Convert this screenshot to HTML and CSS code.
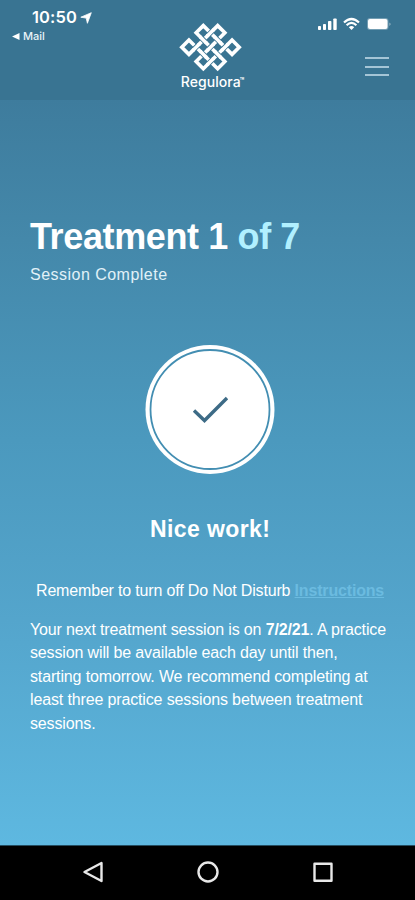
FILE: index.html
```html
<!DOCTYPE html>
<html lang="en">
<head>
<meta charset="utf-8">
<title>Regulora</title>
<link rel="stylesheet" href="styles.css">
</head>
<body>
<div class="screen">
  <header class="top">
    <div class="top-left">
      <div class="clock"><span class="time">10:50</span>
        <svg class="loc" width="12" height="12" viewBox="0 0 12 12"><path d="M11.300.7 7.400 11.300 6.200 6.100.8 5.200z" fill="#fff" stroke="#fff" stroke-width=".8" stroke-linejoin="round"/></svg>
      </div>
      <div class="back"><svg width="8" height="7" viewBox="0 0 8 7"><path d="M7.500 0v7L0 3.500z" fill="#fff"/></svg><span>Mail</span></div>
    </div>
    <div class="brand">
      <svg class="knot" width="63" height="50" viewBox="41.500 35 193 153" fill="none" stroke="#fff" stroke-width="11">
        <path d="M94 68 116 46 204 134 226 112 204 90 116 178 94 156 182 68 160 46 72 134 50 112 72 90 160 178 182 156 94 68 116 46"/>
        <path stroke="#397492" stroke-width="16" d="M131 75l14-14M175 119l14-14M131 119l14-14M87 119l14-14M131 163l14-14M109 83l14 14M153 83l14 14M109 127l14 14M153 127l14 14"/>
        <path d="M128 78l20-20M172 122l20-20M128 122l20-20M84 122l20-20M128 166l20-20M106 80l20 20M150 80l20 20M106 124l20 20M150 124l20 20"/>
      </svg>
      <div class="name">Regulora<span class="tm">™</span></div>
    </div>
    <div class="top-right">
      <svg class="status" width="78" height="16" viewBox="0 0 78 16" fill="#fff">
        <rect x="1" y="10" width="3" height="4" rx=".8"/><rect x="6" y="8" width="3" height="6" rx=".8"/><rect x="11" y="5" width="3.400" height="9" rx=".8"/><rect x="16.300" y="2.500" width="3.400" height="11.500" rx=".8"/>
        <g fill="none" stroke="#fff" stroke-width="2.200"><path d="M27 6.500Q34.500-.5 42 6.500"/><path d="M29.600 9.200Q34.500 4.700 39.400 9.200"/></g><path d="M31.800 11.200Q34.500 9 37.200 11.200L34.500 14z"/>
        <rect x="50" y="2" width="21.500" height="12" rx="3" opacity=".3"/><rect x="51" y="3" width="19.500" height="10" rx="2"/><path d="M72.500 6.500q2 1.500 0 3.500z" opacity=".6"/>
      </svg>
      <div class="menu"><i></i><i></i><i></i></div>
    </div>
  </header>
  <main>
    <h1>Treatment 1 <span>of 7</span></h1>
    <p class="sub">Session Complete</p>
    <svg class="done" width="130" height="130" viewBox="0 0 130 130"><circle cx="65" cy="64.500" r="64.500" fill="#fff"/><circle cx="65" cy="64.500" r="59.500" fill="none" stroke="#438eb2" stroke-width="1.800"/><path d="M49 65.500 59.500 75.500 82 53" fill="none" stroke="#3d6b86" stroke-width="3.400"/></svg>
    <h2>Nice work!</h2>
    <p class="remind">Remember to turn off Do Not Disturb <a>Instructions</a></p>
    <p class="body">Your next treatment session is on <b>7/2/21</b>. A practice<br>session will be available each day until then,<br>starting tomorrow. We recommend completing at<br>least three practice sessions between treatment<br>sessions.</p>
  </main>
  <nav>
    <svg width="22" height="24" viewBox="0 0 22 24"><path d="M19.500 3v18L2.500 12z"/></svg>
    <svg width="24" height="24" viewBox="0 0 24 24"><circle cx="12" cy="12" r="9.500"/></svg>
    <svg width="22" height="24" viewBox="0 0 22 24"><rect x="2.500" y="3.700" width="17" height="17"/></svg>
  </nav>
</div>
</body>
</html>
```
FILE: styles.css
```css
* { box-sizing: border-box; margin: 0; padding: 0; }
body { width: 415px; height: 900px; overflow: hidden; font-family: "Liberation Sans", Arial, sans-serif; color: #fff; }
svg { display: block; }
.screen { height: 900px; display: flex; flex-direction: column; background: linear-gradient(#3e7c9d 100px, #4488aa 240px, #4b99be 440px, #54a5cc 620px, #5eb8e0 845px); }
.top { height: 100px; flex: none; background: #397492; display: grid; grid-template-columns: 120px 1fr 120px; }
.top-left { padding: 7px 0 0 12px; }
.clock { display: flex; align-items: center; padding-left: 20px; height: 21px; font: 600 16.500px/21px Inter, sans-serif; gap: 3px; }
.time { letter-spacing: .1px; }
.back { display: flex; align-items: center; gap: 3px; height: 17px; font: 500 11px/17px Inter, sans-serif; color: #e8f3f8; }
.brand { display: flex; flex-direction: column; align-items: center; padding-top: 22px; }
.knot { margin-left: 6px; }
.name { font: 500 14px/18px Inter, sans-serif; white-space: nowrap; margin: 1px 0 0 10px; letter-spacing: .05px; }
.tm { font-size: 7px; line-height: 1; vertical-align: 4px; font-weight: 700; margin-left: -1px; }
.top-right { padding: 16px 0 0 22px; }
.menu { width: 24px; height: 19px; margin: 25px 0 0 48px; display: flex; flex-direction: column; justify-content: space-between; }
.menu i { height: 2px; background: #a5c5d6; }
main { flex: 1; padding: 114px 30px 0; }
h1 { font-size: 36px; line-height: 46px; white-space: nowrap; letter-spacing: -.38px; }
h1 span { color: #b1f0ff; }
.sub { font-size: 16px; line-height: 22px; margin-top: 4px; letter-spacing: .48px; color: #e1f1f8; }
.done { margin: 59px auto 0 115px; }
h2 { font-size: 23px; line-height: 30px; margin: 39px 0 0 120px; white-space: nowrap; letter-spacing: .4px; }
.remind { font-size: 16px; line-height: 22px; margin: 36px 0 0 6px; white-space: nowrap; letter-spacing: -.17px; }
.remind a { color: #6bbbe0; font-weight: bold; text-decoration: underline; }
.body { font-size: 16px; line-height: 23.400px; margin-top: 16px; white-space: nowrap; letter-spacing: -.14px; }
nav { height: 55px; flex: none; background: #000; border-top: 1px solid #244d60; display: flex; justify-content: space-between; padding: 14px 81px 0 82px; }
nav svg { fill: none; stroke: #e8e8e8; stroke-width: 2.4; stroke-linejoin: round; }
```
